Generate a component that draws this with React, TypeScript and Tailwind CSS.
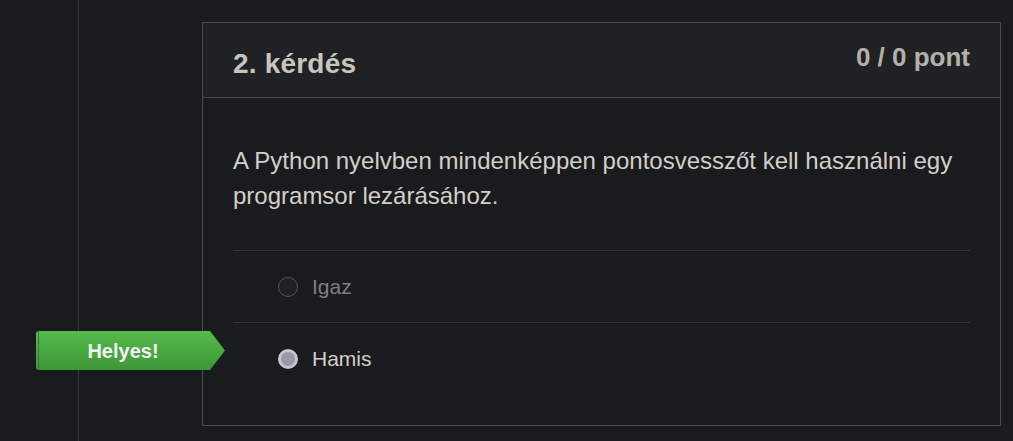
export default function App() {
  return (
    <div className="min-h-screen h-[441px] bg-[#1a1b1e] flex overflow-hidden font-['Liberation_Sans',Arial,sans-serif]">
      {/* left rail */}
      <div className="w-[79px] shrink-0 border-r border-[#353638]" />

      <div className="pl-[123px] pt-[22px]">
        <div className="w-[799px] border border-[#4b4c4e]">
          {/* header */}
          <div className="h-[75px] bg-[#202124] border-b border-[#4b4c4e] px-[30px] flex items-center justify-between">
            <h2 className="text-[28px] leading-none font-bold text-[#c9c5bd] mt-[8px] tracking-[0.2px]">2. kérdés</h2>
            <span className="text-[26px] leading-none font-bold text-[#b5b1a9] mb-[6px]">0 / 0 pont</span>
          </div>

          {/* body */}
          <div className="px-[30px] pt-[45px] pb-[31px]">
            <p className="text-[24px] leading-[35px] text-[#d3cfc7]">
              A Python nyelvben mindenképpen pontosvesszőt kell használni egy programsor lezárásához.
            </p>

            <div className="mt-[37px]">
              <div className="h-[72px] border-t border-[#333437] flex items-center pl-[45px] gap-[14px]">
                <span className="w-5 h-5 rounded-full border border-[#55565a] bg-[#221f27]" />
                <span className="text-[21px] text-[#7f7f7f]">Igaz</span>
              </div>
              <div className="relative h-[72px] border-t border-[#333437] flex items-center pl-[45px] gap-[14px]">
                {/* result badge */}
                <div className="absolute left-[-197px] top-[8px] w-[189px] h-[39px] [clip-path:polygon(0_0,calc(100%-15px)_0,100%_50%,calc(100%-15px)_100%,0_100%)] bg-gradient-to-b from-[#56bb4d] to-[#3d9637] rounded-l-[3px] flex items-center pr-[15px]">
                  <div className="absolute left-[2px] top-0 bottom-0 w-px bg-[#2f7a2b]" />
                  <span className="w-full text-center text-[20px] font-bold text-[#f2f2f2]">Helyes!</span>
                </div>
                <span className="w-5 h-5 rounded-full border-[3px] border-[#c6c5d0] bg-[#9a99a9]" />
                <span className="text-[21px] text-[#d3cfc7]">Hamis</span>
              </div>
            </div>
          </div>
        </div>
      </div>
    </div>
  )
}
